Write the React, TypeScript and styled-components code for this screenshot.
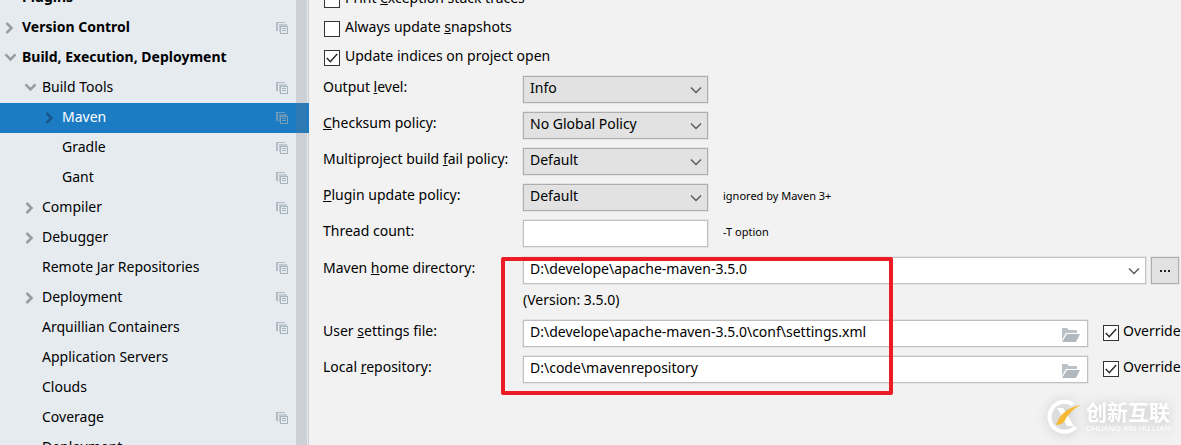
import React from "react";
import styled, { createGlobalStyle } from "styled-components";

const GlobalStyle = createGlobalStyle`
  *, *::before, *::after { box-sizing: border-box; }
  body {
    margin: 0;
    background: #f2f2f2;
    color: #000;
    font: 14px/20px "Noto Sans", "Open Sans", "Noto Sans CJK SC", sans-serif;
  }
`;

const Window = styled.div`
  position: relative;
  display: flex;
  height: 100vh;
  overflow: hidden;
`;

/* ---------- settings tree ---------- */

const Sidebar = styled.nav`
  position: relative;
  flex: 0 0 309px;
  overflow: hidden;
  background: #e6ebf0;
  box-shadow: inset -1px 0 #c9cdd2;
`;

const Tree = styled.ul`
  margin: -17px 0 0;
  padding: 0;
  list-style: none;
`;

const TreeRow = styled.button<{ $level: number; $bold?: boolean; $selected?: boolean }>`
  display: flex;
  align-items: flex-start;
  gap: 6px;
  width: 100%;
  height: 30px;
  padding: 0 21px 0 ${(p) => 4 + p.$level * 20}px;
  border: 0;
  background: ${(p) => (p.$selected ? "#1b7cc4" : "transparent")};
  color: ${(p) => (p.$selected ? "#fff" : "#000")};
  font: inherit;
  font-weight: ${(p) => (p.$bold ? 700 : 400)};
  line-height: 28px;
  text-align: left;

  svg {
    flex: none;
    margin-top: 9px;
  }
`;

const TreeText = styled.span`
  flex: 1;
  white-space: nowrap;
`;

const ScrollThumb = styled.div`
  position: absolute;
  top: 0;
  bottom: 0;
  right: 2px;
  width: 11px;
  background: rgba(115, 115, 120, 0.21);
  pointer-events: none;
`;

/* ---------- form ---------- */

const Main = styled.main`
  flex: 1;
  min-width: 0;
  margin-top: -14px;
  padding: 0 2px 0 14px;
`;

const CheckRow = styled.label`
  display: flex;
  align-items: flex-start;
  gap: 5px;
  height: 29px;
  padding: 2px 0 0 1px;
  white-space: nowrap;
`;

const Check = styled.input`
  appearance: none;
  flex: none;
  width: 16px;
  height: 16px;
  margin: 4px 0 0;
  border: 1px solid #333;
  background: #fff;
`;

const CheckBoxFrame = styled.span`
  position: relative;
  display: flex;
  flex: none;

  svg {
    position: absolute;
    left: 0;
    bottom: 0;
    pointer-events: none;
  }
`;

const Fields = styled.div`
  display: grid;
  gap: 9px;
  padding-top: 3px;
`;

const FieldRow = styled.div`
  display: grid;
  grid-template-columns: 200px minmax(0, 1fr);
  align-items: start;
  height: 27px;
`;

const FieldLabel = styled.label`
  padding: 1px 0 0;
  white-space: nowrap;
`;

const Value = styled.div<{ $gap?: number }>`
  display: flex;
  align-items: flex-start;
  gap: ${(p) => p.$gap ?? 15}px;
`;

const Control = styled.div<{ $wide?: boolean }>`
  position: relative;
  flex: ${(p) => (p.$wide ? "1" : "0 0 185px")};
  min-width: 0;
  height: 27px;

  svg {
    position: absolute;
    top: 9px;
    right: 6px;
    pointer-events: none;
  }
`;

const Select = styled.select<{ $light?: boolean }>`
  appearance: none;
  display: block;
  width: 100%;
  height: 27px;
  padding: 0 24px 4px 6px;
  border: 1px solid ${(p) => (p.$light ? "#c3c3c3" : "#adadad")};
  border-radius: 0;
  background: ${(p) => (p.$light ? "#fff" : "#e2e2e2")};
  box-shadow: 0 0 0 1px #e4e4e4;
  color: #000;
  font: inherit;
`;

const Text = styled.input`
  display: block;
  width: 100%;
  height: 27px;
  padding: 0 30px 4px 6px;
  border: 1px solid #c0c0c0;
  border-radius: 0;
  background: #fff;
  box-shadow: 0 0 0 1px #e4e4e4;
  color: #000;
  font: inherit;
`;

const Hint = styled.span`
  padding-top: 2px;
  font-size: 11px;
  white-space: nowrap;
`;

const BrowseButton = styled.button`
  display: flex;
  flex: none;
  align-items: center;
  justify-content: center;
  width: 28px;
  height: 27px;
  padding: 0;
  border: 1px solid #adadad;
  background: #e2e2e2;
  box-shadow: 0 0 0 1px #e4e4e4;
`;

const FolderButton = styled.button`
  position: absolute;
  top: 1px;
  right: 1px;
  width: 28px;
  height: 25px;
  padding: 0;
  border: 0;
  background: #fff;

  svg {
    top: 7px;
    right: 6px;
  }
`;

const Override = styled(CheckRow)`
  flex: 0 0 76px;
  gap: 4px;
  min-width: 0;
  height: 27px;
  padding: 1px 0 0;
`;

const Paths = styled.div`
  position: relative;
  margin-top: 10px;
`;

const Version = styled.p`
  height: 36px;
  margin: 0 0 0 200px;
  padding: 6px 0 0;
`;

const PathRow = styled(FieldRow)`
  & + & {
    margin-top: 9px;
  }
`;

const Highlight = styled.div`
  position: absolute;
  top: 0;
  bottom: -12px;
  left: 178px;
  width: 392px;
  border: 4px solid #ed1c24;
  border-radius: 2px;
  pointer-events: none;
`;

/* ---------- watermark ---------- */

const Watermark = styled.div`
  position: absolute;
  right: 7px;
  bottom: 10px;
  display: flex;
  align-items: center;
  gap: 4px;
  color: #fff;
  filter: drop-shadow(0 1px 6px rgba(0, 0, 0, 0.2));
  pointer-events: none;
`;

const WatermarkText = styled.div`
  display: grid;
  justify-items: start;
  width: 88px;
  white-space: nowrap;
`;

const WatermarkName = styled.span`
  font: 700 21px/24px "Noto Sans CJK SC", sans-serif;
`;

const WatermarkLatin = styled.span`
  font: 8px/12px "Liberation Sans", Arial, sans-serif;
  color: #fff;
`;

/* ---------- drawings ---------- */

const Arrow = ({ open, selected }: { open?: boolean; selected?: boolean }) => (
  <svg width="12" height="12" viewBox="0 0 12 12" fill="none" stroke={selected ? "#17598d" : "#9a9da0"} strokeWidth="2.6">
    <path d={open ? "M1.500 2.300 6.500 7.300 11.500 2.300" : "M2.500 1 7.500 6 2.500 11"} />
  </svg>
);

const NoArrow = () => <svg width="12" height="12" aria-hidden="true" />;

const CopyIcon = ({ selected }: { selected?: boolean }) => {
  const strong = selected ? "#7a9fb8" : "#a7b3bd";
  const soft = selected ? "#5b8fb5" : "#c0cad2";
  return (
    <svg width="12" height="12" viewBox="0 0 12 12" shapeRendering="crispEdges">
      <path d="M0 0h9v1H2v8H0z" fill={strong} opacity=".85" />
      <path d="M3 2h8v2H4v6H3z" fill={soft} />
      <path fillRule="evenodd" d="M4 4h8v8H4zM5 5v6h6V5z" fill={strong} />
      <path d="M6 6h4v1H6zM6 8h4v1H6z" fill={strong} />
    </svg>
  );
};

const Chevron = () => (
  <svg width="12" height="10" viewBox="0 0 12 10" fill="none" stroke="#555" strokeWidth="1.3">
    <path d="M1 2.5 6 7.5 11 2.5" />
  </svg>
);

const Tick = () => (
  <svg width="16" height="16" viewBox="0 0 16 16" fill="none" stroke="#2b2b2b" strokeWidth="1.5">
    <path d="M2.8 8 6.3 11.7 13.2 4" />
  </svg>
);

const Folder = () => (
  <svg width="20" height="14" viewBox="0 0 20 14">
    <path d="M1 0h5l2 2h8v3H5L1 12z" fill="#bcc3c8" />
    <path d="M6 6h13l-4 8H1z" fill="#b1b9bf" />
  </svg>
);

const Logo = () => (
  <svg width="36" height="36" viewBox="0 0 36 36" fill="none">
    <path d="M27 5.5A15 15 0 1 0 29.500 28" stroke="#fff" strokeWidth="4" />
    <path d="M11 9h6l11 18h-7z" fill="#fff" />
    <path d="M10 26C14 15 22 8 35 6 27 10 23 14 18 23c-2 2-5 3-8 3z" fill="#f6b936" />
  </svg>
);

/* ---------- data ---------- */

interface Item {
  name: string;
  level: number;
  arrow?: "open" | "closed";
  copy?: boolean;
  selected?: boolean;
}

const items: Item[] = [
  { name: "Plugins", level: 0 },
  { name: "Version Control", level: 0, arrow: "closed", copy: true },
  { name: "Build, Execution, Deployment", level: 0, arrow: "open" },
  { name: "Build Tools", level: 1, arrow: "open", copy: true },
  { name: "Maven", level: 2, arrow: "closed", copy: true, selected: true },
  { name: "Gradle", level: 2, copy: true },
  { name: "Gant", level: 2, copy: true },
  { name: "Compiler", level: 1, arrow: "closed", copy: true },
  { name: "Debugger", level: 1, arrow: "closed" },
  { name: "Remote Jar Repositories", level: 1, copy: true },
  { name: "Deployment", level: 1, arrow: "closed", copy: true },
  { name: "Arquillian Containers", level: 1, copy: true },
  { name: "Application Servers", level: 1 },
  { name: "Clouds", level: 1 },
  { name: "Coverage", level: 1, copy: true },
  { name: "Deployment", level: 1 },
];

const policies = [
  { id: "output", label: <>Output <u>l</u>evel:</>, value: "Info" },
  { id: "checksum", label: <><u>C</u>hecksum policy:</>, value: "No Global Policy" },
  { id: "fail", label: <>Multiproject build <u>f</u>ail policy:</>, value: "Default" },
  { id: "plugin", label: <><u>P</u>lugin update policy:</>, value: "Default", hint: "ignored by Maven 3+" },
];

const paths = [
  { id: "settings", label: <>User <u>s</u>ettings file:</>, value: "D:\\develope\\apache-maven-3.5.0\\conf\\settings.xml" },
  { id: "repository", label: <>Local <u>r</u>epository:</>, value: "D:\\code\\mavenrepository" },
];

const CheckBox = ({ checked }: { checked?: boolean }) => (
  <CheckBoxFrame>
    <Check type="checkbox" defaultChecked={checked} />
    {checked && <Tick />}
  </CheckBoxFrame>
);

export default function App() {
  return (
    <Window>
      <GlobalStyle />
      <Sidebar aria-label="Settings">
        <Tree>
          {items.map((item, i) => (
            <li key={i}>
              <TreeRow type="button" $level={item.level} $bold={item.level === 0} $selected={item.selected}>
                {item.arrow ? <Arrow open={item.arrow === "open"} selected={item.selected} /> : <NoArrow />}
                <TreeText>{item.name}</TreeText>
                {item.copy && <CopyIcon selected={item.selected} />}
              </TreeRow>
            </li>
          ))}
        </Tree>
        <ScrollThumb />
      </Sidebar>

      <Main>
        <CheckRow><CheckBox /><span>Print <u>e</u>xception stack traces</span></CheckRow>
        <CheckRow><CheckBox /><span>Always update <u>s</u>napshots</span></CheckRow>
        <CheckRow><CheckBox checked /><span>Update indices on project open</span></CheckRow>

        <Fields>
          {policies.map((p) => (
            <FieldRow key={p.id}>
              <FieldLabel htmlFor={p.id}>{p.label}</FieldLabel>
              <Value>
                <Control>
                  <Select id={p.id}><option>{p.value}</option></Select>
                  <Chevron />
                </Control>
                {p.hint && <Hint>{p.hint}</Hint>}
              </Value>
            </FieldRow>
          ))}
          <FieldRow>
            <FieldLabel htmlFor="threads">Thread count:</FieldLabel>
            <Value>
              <Control><Text id="threads" /></Control>
              <Hint>-T option</Hint>
            </Value>
          </FieldRow>
        </Fields>

        <Paths>
          <FieldRow>
            <FieldLabel htmlFor="home">Maven <u>h</u>ome directory:</FieldLabel>
            <Value $gap={5}>
              <Control $wide>
                <Select id="home" $light><option>D:\develope\apache-maven-3.5.0</option></Select>
                <Chevron />
              </Control>
              <BrowseButton type="button" aria-label="Browse">
                <svg width="12" height="4" viewBox="0 0 12 4">
                  <path d="M1 1h2v2H1zM5 1h2v2H5zM9 1h2v2H9z" fill="#222" />
                </svg>
              </BrowseButton>
            </Value>
          </FieldRow>
          <Version>(Version: 3.5.0)</Version>
          {paths.map((p) => (
            <PathRow key={p.id}>
              <FieldLabel htmlFor={p.id}>{p.label}</FieldLabel>
              <Value>
                <Control $wide>
                  <Text id={p.id} defaultValue={p.value} />
                  <FolderButton type="button" aria-label="Choose path"><Folder /></FolderButton>
                </Control>
                <Override><CheckBox checked /><span>Override</span></Override>
              </Value>
            </PathRow>
          ))}
          <Highlight />
        </Paths>
      </Main>

      <Watermark>
        <Logo />
        <WatermarkText>
          <WatermarkName>创新互联</WatermarkName>
          <WatermarkLatin>CHUANG XIN HU LIAN</WatermarkLatin>
        </WatermarkText>
      </Watermark>
    </Window>
  );
}
